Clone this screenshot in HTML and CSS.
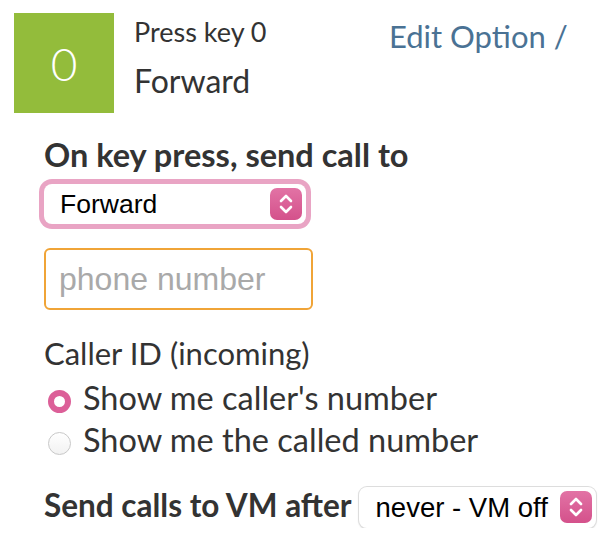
FILE: index.html
```html
<!DOCTYPE html>
<html lang="en">
  <head>
    <meta charset="UTF-8" />
    <meta name="viewport" content="width=device-width, initial-scale=1.0" />
    <title>Key option</title>
    <link rel="stylesheet" href="styles.css">
  </head>
  <body>
    <div class="option">
      <div class="option-head">
        <div class="key-badge">0</div>
        <div class="key-info">
          <div class="key-label">Press key 0</div>
          <div class="key-action">Forward</div>
        </div>
        <a class="edit-link" href="#">Edit Option /</a>
      </div>
      <!-- .option-head -->

      <form class="option-form">
        <label class="form-title" for="action">On key press, send call to</label>
        <div class="select-wrap focused">
          <select id="action">
            <option>Forward</option>
            <option>Voicemail</option>
            <option>Hang up</option>
          </select>
          <span class="select-arrow">
            <svg viewBox="0 0 32 32" width="32" height="32">
              <path d="M11 13 L16 8 L21 13 M11 19 L16 24 L21 19" fill="none" stroke="#fff" stroke-width="2.6" stroke-linecap="round" stroke-linejoin="round" />
            </svg>
          </span>
        </div>

        <input class="phone" type="text" placeholder="phone number" />

        <div class="caller-id">
          <div class="caller-title">Caller ID (incoming)</div>
          <label class="radio-row">
            <input type="radio" name="callerid" checked />
            <span>Show me caller's number</span>
          </label>
          <label class="radio-row">
            <input type="radio" name="callerid" />
            <span>Show me the called number</span>
          </label>
        </div>

        <div class="vm-row">
          <label class="form-title" for="vm">Send calls to VM after</label>
          <div class="select-wrap small">
            <select id="vm">
              <option>never - VM off</option>
              <option>20 seconds</option>
              <option>30 seconds</option>
            </select>
            <span class="select-arrow">
              <svg viewBox="0 0 32 32" width="32" height="32">
                <path d="M11 13 L16 8 L21 13 M11 19 L16 24 L21 19" fill="none" stroke="#fff" stroke-width="2.6" stroke-linecap="round" stroke-linejoin="round" />
              </svg>
            </span>
          </div>
        </div>
      </form>
      <!-- .option-form -->
    </div>
    <!-- .option -->
  </body>
</html>
```

FILE: styles.css
```css
*,
*::before,
*::after {
  box-sizing: border-box;
  padding: 0;
  margin: 0;
}

body {
  background-color: #fff;
  color: #333;
  font-family: 'Lato', 'Open Sans', sans-serif;
}

.option {
  padding: 13px 0 0 14px;
}

.option-head {
  display: flex;
  align-items: flex-start;
}

.key-badge {
  width: 100px;
  height: 100px;
  display: flex;
  align-items: center;
  justify-content: center;
  background-color: #93bc3b;
  color: #fff;
  font-size: 46px;
  font-weight: 300;
}

.key-info {
  width: 275px;
  padding: 4px 0 0 20px;
}

.key-label {
  font-size: 27px;
  line-height: 30px;
}

.key-action {
  margin-top: 16px;
  font-size: 32px;
  line-height: 36px;
}

.edit-link {
  margin-top: 5px;
  color: #4a7294;
  font-size: 31px;
  line-height: 36px;
  text-decoration: none;
}

.option-form {
  padding: 24px 0 0 30px;
  display: flex;
  flex-direction: column;
  align-items: flex-start;
}

.form-title {
  font-size: 32.5px;
  font-weight: bold;
  line-height: 36px;
}

.select-wrap {
  position: relative;
  margin-top: 11px;
  width: 262px;
  height: 40px;
  border-radius: 8px;
  background-color: #fff;
  box-shadow: 0 0 0 1px #ddd, 0 1px 2px rgba(0, 0, 0, 0.25);
}

.select-wrap.focused {
  box-shadow: 0 0 0 5px #e9a4c4;
}

.select-wrap select {
  appearance: none;
  -webkit-appearance: none;
  width: 100%;
  height: 100%;
  padding: 0 44px 0 16px;
  border: none;
  background: transparent;
  color: #000;
  font-family: 'Liberation Sans', Arial, sans-serif;
  font-size: 26.5px;
  outline: none;
}

.select-arrow {
  position: absolute;
  top: 4px;
  right: 4px;
  width: 32px;
  height: 32px;
  border-radius: 7px;
  background: linear-gradient(#e273a5, #d4518b);
  pointer-events: none;
}

.select-arrow svg {
  display: block;
}

.phone {
  margin-top: 24px;
  width: 269px;
  height: 62px;
  padding: 0 13px;
  border: 2px solid #f0a437;
  border-radius: 6px;
  color: #333;
  font-family: 'Liberation Sans', Arial, sans-serif;
  font-size: 32px;
  outline: none;
}

.phone::placeholder {
  color: #a9a9a9;
}

.caller-id {
  margin-top: 25px;
}

.caller-title {
  font-size: 31px;
  line-height: 36px;
}

.radio-row {
  margin-top: 6px;
  display: flex;
  align-items: center;
  gap: 12px;
  font-size: 32.5px;
  line-height: 42px;
}

.radio-row + .radio-row {
  margin-top: 0;
}

.radio-row input {
  appearance: none;
  -webkit-appearance: none;
  width: 23px;
  height: 23px;
  margin: 7px 0 0 4px;
  border-radius: 50%;
  border: 1px solid #c8c8c8;
  background: linear-gradient(#fff, #f2f2f2);
}

.radio-row input:checked {
  border: 6px solid #dc5f98;
  background: #fff;
}

.vm-row {
  margin-top: 26px;
  display: flex;
  align-items: center;
  gap: 7px;
}

.vm-row .form-title {
  margin-bottom: 5px;
  font-size: 31.5px;
}

.select-wrap.small {
  margin-top: 0;
  width: 237px;
  height: 41px;
}

.select-wrap.small select {
  padding-left: 17px;
  font-size: 27.5px;
}
```
